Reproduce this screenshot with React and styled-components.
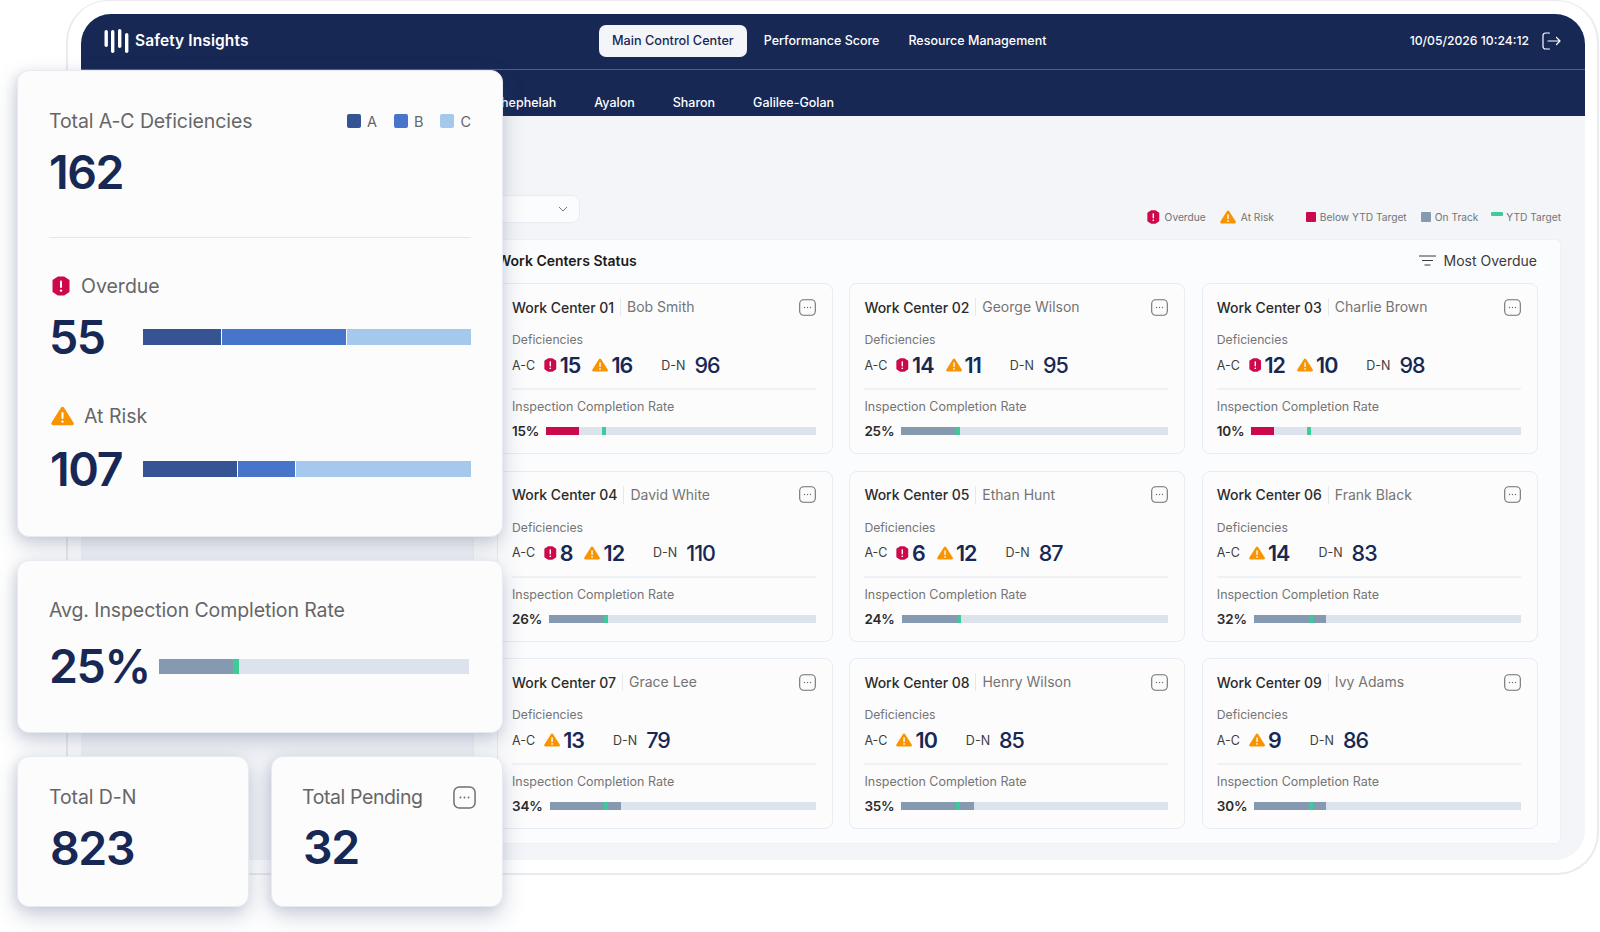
import React from 'react'
import styled, { createGlobalStyle } from 'styled-components'

const GlobalStyle = createGlobalStyle`
  html, body {
    margin: 0;
    padding: 0;
    background: #fff;
  }
  body {
    font-family: Inter, "Liberation Sans", sans-serif;
    color: #2b2b2b;
    overflow: hidden;
  }
`

const colors = {
  navy: '#172855',
  red: '#cc0a4b',
  orange: '#f79400',
  a: '#365394',
  b: '#4675c9',
  c: '#a5c8ed',
  track: '#dde3ec',
  onTrack: '#8599b0',
  target: '#3fcb97',
  muted: '#747474',
}

const Page = styled.div`
  position: relative;
  width: 1600px;
  height: 932px;
  overflow: hidden;
  background: #fff;
`

const Frame = styled.div`
  box-sizing: border-box;
  margin-left: 66px;
  width: 1533px;
  height: 875px;
  padding: 13px 12px 13px 13px;
  background: #fff;
  border: 2px solid #e9ebef;
  border-top-width: 1px;
  border-radius: 42px;
`

const Shell = styled.div`
  display: flex;
  flex-direction: column;
  height: 100%;
  border-radius: 30px;
  overflow: hidden;
  background: #f3f5f8;
`

const TopBar = styled.header`
  flex: none;
  display: grid;
  grid-template-columns: 518px auto 1fr;
  align-items: center;
  box-sizing: border-box;
  height: 56px;
  background: ${colors.navy};
  border-bottom: 1px solid #51618a;
  padding: 0 24px 2px 0;
`

const Brand = styled.div`
  display: flex;
  align-items: center;
  gap: 6px;
  padding-left: 23px;
  color: #fff;
  font-size: 15.5px;
  font-weight: 600;
  letter-spacing: 0.1px;
`

const MainNav = styled.nav`
  display: flex;
  align-items: center;
  gap: 17px;
`

const NavItem = styled.a`
  display: block;
  padding: 0 ${p => (p.$active ? '13px' : '0')};
  height: 32px;
  line-height: 32px;
  margin-right: ${p => (p.$active ? '0' : '12px')};
  border-radius: 7px;
  font-size: ${p => (p.$active ? '12.7px' : '12.5px')};
  font-weight: 500;
  color: ${p => (p.$active ? colors.navy : '#fff')};
  background: ${p => (p.$active ? '#f3f5f8' : 'transparent')};
`

const Clock = styled.div`
  display: flex;
  align-items: center;
  justify-content: flex-end;
  gap: 13px;
  color: #fff;
  font-size: 12.2px;
  font-weight: 500;
`

const SubNav = styled.nav`
  flex: none;
  display: flex;
  align-items: center;
  gap: 38px;
  height: 46px;
  padding: 18px 0 0 412px;
  box-sizing: border-box;
  background: ${colors.navy};
  color: #fff;
  font-size: 12.5px;
  font-weight: 500;
`

const Content = styled.main`
  flex: 1;
  min-height: 0;
  display: flex;
  flex-direction: column;
  padding: 79px 24px 16px 392px;
`

const Toolbar = styled.div`
  flex: none;
  display: flex;
  align-items: center;
  justify-content: space-between;
  height: 28px;
  margin-bottom: 16px;
`

const Select = styled.div`
  display: flex;
  align-items: center;
  justify-content: flex-end;
  box-sizing: border-box;
  width: 107px;
  height: 28px;
  padding-right: 11px;
  background: #fbfcfd;
  border: 1px solid #e8ecf3;
  border-radius: 8px;
`

const Legend = styled.div`
  display: flex;
  align-items: center;
  padding-top: 16px;
  font-size: 10.2px;
  color: ${colors.muted};
`

const LegendItem = styled.span`
  display: flex;
  align-items: center;
  gap: ${p => p.$gap || 4}px;
  margin-right: ${p => p.$after || 0}px;
  white-space: nowrap;
`

const Swatch = styled.i`
  display: block;
  width: ${p => p.$w || 10}px;
  height: ${p => p.$h || 10}px;
  margin-top: ${p => p.$top || 0}px;
  background: ${p => p.$color};
  border-radius: ${p => p.$radius || 1}px;
`

const Panel = styled.section`
  flex: 1;
  padding: 0 23px 14px;
  background: #fbfcfd;
  border: 1px solid #eef0f5;
  border-radius: 6px;
`

const PanelHead = styled.div`
  display: flex;
  align-items: center;
  justify-content: space-between;
  box-sizing: border-box;
  height: 43px;
  padding-bottom: 2px;
`

const PanelTitle = styled.h2`
  margin: 0;
  font-size: 14px;
  font-weight: 600;
  color: #1b1b1b;
`

const Sort = styled.div`
  display: flex;
  align-items: center;
  gap: 8px;
  font-size: 14px;
  color: #3a3a3a;
`

const Grid = styled.div`
  display: grid;
  grid-template-columns: repeat(3, 336px);
  grid-auto-rows: 171px;
  column-gap: 16.4px;
  row-gap: 16.5px;
`

const Card = styled.article`
  box-sizing: border-box;
  padding: 13px 16px 0 14px;
  background: #fcfcfd;
  border: 1px solid #e8ecf3;
  border-radius: 8px;
`

const CardHead = styled.div`
  display: flex;
  align-items: center;
  height: 20px;
  font-size: 14px;
`

const CenterName = styled.span`
  font-weight: 500;
  color: #2b2b2b;
  letter-spacing: -0.05px;
`

const Person = styled.span`
  margin-left: 6px;
  padding-left: 6px;
  border-left: 1px solid #e4e8f0;
  line-height: 18px;
  color: ${colors.muted};
`

const MoreSlot = styled.span`
  display: flex;
  margin-left: auto;
`

const SmallLabel = styled.div`
  font-size: ${p => p.$size || 12.5}px;
  line-height: 16px;
  color: ${colors.muted};
  margin-top: ${p => p.$top}px;
`

const Counts = styled.div`
  display: flex;
  align-items: center;
  height: 24px;
  margin-top: 5px;
`

const RowLabel = styled.span`
  font-size: 12.5px;
  color: #3c3c3c;
  margin-left: ${p => p.$before || 0}px;
  margin-right: ${p => p.$after}px;
`

const Flag = styled.span`
  display: flex;
  align-items: center;
  gap: 3px;
  margin-right: 12px;
`

const Num = styled.span`
  font-size: 21.5px;
  font-weight: ${p => p.$weight || 600};
  letter-spacing: -1px;
  color: ${colors.navy};
`

const Rule = styled.div`
  height: 2px;
  margin-top: 11px;
  background: #eef1f6;
`

const RateRow = styled.div`
  display: flex;
  align-items: center;
  gap: 7px;
  margin-top: 8px;
`

const Pct = styled.span`
  font-size: 13.5px;
  font-weight: 600;
  color: #2b2b2b;
  letter-spacing: -0.2px;
`

const Track = styled.div`
  position: relative;
  flex: 1;
  height: ${p => p.$h || 8}px;
  background: ${colors.track};
`

const Fill = styled.div`
  height: 100%;
  background: ${p => p.$color};
`

const Marker = styled.div`
  position: absolute;
  top: 0;
  bottom: 0;
  width: ${p => p.$w || 4}px;
  background: ${colors.target};
`

const OverlayColumn = styled.div`
  position: absolute;
  left: 17px;
  top: 70px;
  width: 486px;
  display: flex;
  flex-direction: column;
  gap: 23px;
`

const StatCard = styled.section`
  box-sizing: border-box;
  height: ${p => p.$h}px;
  padding: ${p => p.$pad || '37px 31px 0 31px'};
  background: #fcfcfd;
  border: 1px solid #e6eaf1;
  border-radius: 12px;
  box-shadow: 0 9px 22px rgba(66, 82, 120, 0.26), -3px 2px 10px rgba(66, 82, 120, 0.1);
`

const StatRow = styled.div`
  display: grid;
  grid-template-columns: repeat(2, 232px);
  column-gap: 22px;
`

const StatHead = styled.div`
  display: flex;
  align-items: center;
  justify-content: space-between;
`

const StatTitle = styled.h3`
  margin: 0;
  font-size: 19.5px;
  line-height: 26px;
  font-weight: 400;
  letter-spacing: ${p => (p.$tight ? '-0.4px' : '-0.1px')};
  color: #666;
`

const KeyList = styled.div`
  display: flex;
  gap: 17px;
  font-size: 14.5px;
  color: #666;
`

const Key = styled.span`
  display: flex;
  align-items: center;
  gap: 6px;
`

const BigNum = styled.div`
  font-size: 46.5px;
  line-height: ${p => p.$lh || 56}px;
  font-weight: 600;
  letter-spacing: -1.4px;
  color: ${colors.navy};
  margin-top: ${p => p.$top || 0}px;
  margin-left: ${p => p.$left || 0}px;
  min-width: ${p => p.$min || 0}px;
`

const Divider = styled.div`
  height: 1px;
  margin-top: 37px;
  background: #e2e6ee;
`

const StatusLabel = styled.div`
  display: flex;
  align-items: center;
  gap: ${p => p.$gap}px;
  margin-top: ${p => p.$top}px;
  margin-left: ${p => p.$left}px;
  height: 22px;
  font-size: 19.5px;
  color: #666;
`

const StatusRow = styled.div`
  display: flex;
  align-items: center;
  margin-top: ${p => p.$top}px;
`

const Stack = styled.div`
  flex: 1;
  display: flex;
  gap: 1px;
  height: 16px;
`

const Segment = styled.div`
  background: ${p => p.$color};
`

const OverdueIcon = ({ size = 14 }) => (
  <svg width={size * 0.9} height={size} viewBox="0 0 18 20">
    <polygon points="6,1.5 12,1.5 16.5,4.5 16.5,15.5 12,18.5 6,18.5 1.5,15.5 1.5,4.5" fill={colors.red} stroke={colors.red} strokeWidth="2" strokeLinejoin="round" />
    <rect x="8" y="4.5" width="2" height="7.5" rx="1" fill="#fff" />
    <circle cx="9" cy="14.6" r="1.2" fill="#fff" />
  </svg>
)

const RiskIcon = ({ size = 14 }) => (
  <svg width={size * 1.15} height={size} viewBox="0 0 23 20">
    <path d="M11.5 2.5 L21 17.5 H2 Z" fill={colors.orange} stroke={colors.orange} strokeWidth="3.4" strokeLinejoin="round" />
    <rect x="10.5" y="6" width="2" height="7" rx="1" fill="#fff" />
    <circle cx="11.5" cy="15.6" r="1.2" fill="#fff" />
  </svg>
)

const MoreIcon = ({ size = 17 }) => (
  <svg width={size} height={size} viewBox="0 0 17 17" fill="none">
    <rect x="0.7" y="0.7" width="15.6" height="15.6" rx="4" stroke="#6f6f6f" strokeWidth="1.1" />
    <circle cx="5.5" cy="8.5" r="0.7" fill="#6f6f6f" />
    <circle cx="8.5" cy="8.5" r="0.7" fill="#6f6f6f" />
    <circle cx="11.5" cy="8.5" r="0.7" fill="#6f6f6f" />
  </svg>
)

const Logo = () => (
  <svg width="25" height="24" viewBox="0 0 25 24" fill="#fff">
    <rect x="0.5" y="1" width="3.4" height="17" rx="1.7" />
    <rect x="7" y="1" width="3.4" height="23" rx="1.7" />
    <rect x="14" y="0" width="3.4" height="19" rx="1.7" />
    <rect x="21" y="4" width="3.4" height="20" rx="1.7" />
  </svg>
)

const LogoutIcon = () => (
  <svg width="19" height="18" viewBox="0 0 19 18" fill="none" stroke="#fff" strokeWidth="1.2" strokeLinecap="round" strokeLinejoin="round">
    <path d="M7.5 1 H3.5 A2.5 2.5 0 0 0 1 3.5 V14.5 A2.5 2.5 0 0 0 3.5 17 H7.5" />
    <path d="M6 9 H18 M14.5 5.5 L18 9 L14.5 12.5" />
  </svg>
)

const SortIcon = () => (
  <svg width="17" height="11" viewBox="0 0 17 11" fill="none" stroke="#3a3a3a" strokeWidth="1.1">
    <path d="M0 1 H17 M3 5.5 H14 M5.5 10 H11.5" />
  </svg>
)

const Chevron = () => (
  <svg width="10" height="6" viewBox="0 0 10 6" fill="none" stroke="#777" strokeWidth="1">
    <path d="M1 1 L5 5 L9 1" />
  </svg>
)

const centers = [
  { id: '01', name: 'Bob Smith', overdue: 15, risk: 16, dn: 96, pct: 15, fill: 12.3, low: true },
  { id: '02', name: 'George Wilson', overdue: 14, risk: 11, dn: 95, pct: 25, fill: 21.5 },
  { id: '03', name: 'Charlie Brown', overdue: 12, risk: 10, dn: 98, pct: 10, fill: 8.5, low: true },
  { id: '04', name: 'David White', overdue: 8, risk: 12, dn: 110, pct: 26, fill: 21.5 },
  { id: '05', name: 'Ethan Hunt', overdue: 6, risk: 12, dn: 87, pct: 24, fill: 22 },
  { id: '06', name: 'Frank Black', risk: 14, dn: 83, pct: 32, fill: 26.9 },
  { id: '07', name: 'Grace Lee', risk: 13, dn: 79, pct: 34, fill: 27 },
  { id: '08', name: 'Henry Wilson', risk: 10, dn: 85, pct: 35, fill: 27.3 },
  { id: '09', name: 'Ivy Adams', risk: 9, dn: 86, pct: 30, fill: 27 },
]

const CenterCard = ({ center }) => (
  <Card>
    <CardHead>
      <CenterName>Work Center {center.id}</CenterName>
      <Person>{center.name}</Person>
      <MoreSlot><MoreIcon /></MoreSlot>
    </CardHead>
    <SmallLabel $top={15} $size={12.2}>Deficiencies</SmallLabel>
    <Counts>
      <RowLabel $after={9}>A-C</RowLabel>
      {center.overdue !== undefined && (
        <Flag>
          <OverdueIcon />
          <Num>{center.overdue}</Num>
        </Flag>
      )}
      <Flag>
        <RiskIcon />
        <Num>{center.risk}</Num>
      </Flag>
      <RowLabel $before={17} $after={9}>D-N</RowLabel>
      <Num $weight={500}>{center.dn}</Num>
    </Counts>
    <Rule />
    <SmallLabel $top={9}>Inspection Completion Rate</SmallLabel>
    <RateRow>
      <Pct>{center.pct}%</Pct>
      <Track>
        <Fill $color={center.low ? colors.red : colors.onTrack} style={{ width: `${center.fill}%` }} />
        <Marker style={{ left: '20.6%' }} />
      </Track>
    </RateRow>
  </Card>
)

export default function App() {
  return (
    <Page>
      <GlobalStyle />
      <Frame>
        <Shell>
          <TopBar>
            <Brand>
              <Logo />
              Safety Insights
            </Brand>
            <MainNav>
              <NavItem $active>Main Control Center</NavItem>
              <NavItem>Performance Score</NavItem>
              <NavItem>Resource Management</NavItem>
            </MainNav>
            <Clock>
              10/05/2026 10:24:12
              <LogoutIcon />
            </Clock>
          </TopBar>
          <SubNav>
            <span>Shephelah</span>
            <span>Ayalon</span>
            <span>Sharon</span>
            <span>Galilee-Golan</span>
          </SubNav>
          <Content>
            <Toolbar>
              <Select><Chevron /></Select>
              <Legend>
                <LegendItem $after={14} $gap={5}><OverdueIcon size={14} />Overdue</LegendItem>
                <LegendItem $after={32} $gap={5}><RiskIcon size={14} />At Risk</LegendItem>
                <LegendItem $after={14}><Swatch $color={colors.red} />Below YTD Target</LegendItem>
                <LegendItem $after={13}><Swatch $color={colors.onTrack} />On Track</LegendItem>
                <LegendItem $gap={3}><Swatch $color={colors.target} $w={12} $h={4} $top={-6} />YTD Target</LegendItem>
              </Legend>
            </Toolbar>
            <Panel>
              <PanelHead>
                <PanelTitle>Work Centers Status</PanelTitle>
                <Sort><SortIcon />Most Overdue</Sort>
              </PanelHead>
              <Grid>
                {centers.map(c => <CenterCard key={c.id} center={c} />)}
              </Grid>
            </Panel>
          </Content>
        </Shell>
      </Frame>

      <OverlayColumn>
        <StatCard $h={467}>
          <StatHead>
            <StatTitle>Total A-C Deficiencies</StatTitle>
            <KeyList>
              <Key><Swatch $color={colors.a} $w={14} $h={14} $radius={2} />A</Key>
              <Key><Swatch $color={colors.b} $w={14} $h={14} $radius={2} />B</Key>
              <Key><Swatch $color={colors.c} $w={14} $h={14} $radius={2} />C</Key>
            </KeyList>
          </StatHead>
          <BigNum $top={10}>162</BigNum>
          <Divider />
          <StatusLabel $top={37} $left={3} $gap={11}><OverdueIcon size={20} />Overdue</StatusLabel>
          <StatusRow $top={18}>
            <BigNum $lh={44} $left={0} $min={94}>55</BigNum>
            <Stack>
              <Segment $color={colors.a} style={{ width: '78px' }} />
              <Segment $color={colors.b} style={{ width: '124px' }} />
              <Segment $color={colors.c} style={{ flex: 1 }} />
            </Stack>
          </StatusRow>
          <StatusLabel $top={46} $left={2} $gap={10}><RiskIcon size={20} />At Risk</StatusLabel>
          <StatusRow $top={20}>
            <BigNum $lh={44} $left={1} $min={93}>107</BigNum>
            <Stack>
              <Segment $color={colors.a} style={{ width: '94px' }} />
              <Segment $color={colors.b} style={{ width: '57px' }} />
              <Segment $color={colors.c} style={{ flex: 1 }} />
            </Stack>
          </StatusRow>
        </StatCard>

        <StatCard $h={173} $pad="36px 33px 0 31px">
          <StatTitle>Avg. Inspection Completion Rate</StatTitle>
          <StatusRow $top={15}>
            <BigNum $min={110}>25%</BigNum>
            <Track $h={15}>
              <Fill $color={colors.onTrack} style={{ width: '25.5%' }} />
              <Marker $w={6} style={{ left: '23.9%' }} />
            </Track>
          </StatusRow>
        </StatCard>

        <StatRow>
          <StatCard $h={151} $pad="27px 20px 0 31px">
            <StatTitle>Total D-N</StatTitle>
            <BigNum $top={10} $left={1}>823</BigNum>
          </StatCard>
          <StatCard $h={151} $pad="27px 26px 0 30px">
            <StatHead>
              <StatTitle $tight>Total Pending</StatTitle>
              <MoreIcon size={23} />
            </StatHead>
            <BigNum $top={9} $left={1}>32</BigNum>
          </StatCard>
        </StatRow>
      </OverlayColumn>
    </Page>
  )
}
